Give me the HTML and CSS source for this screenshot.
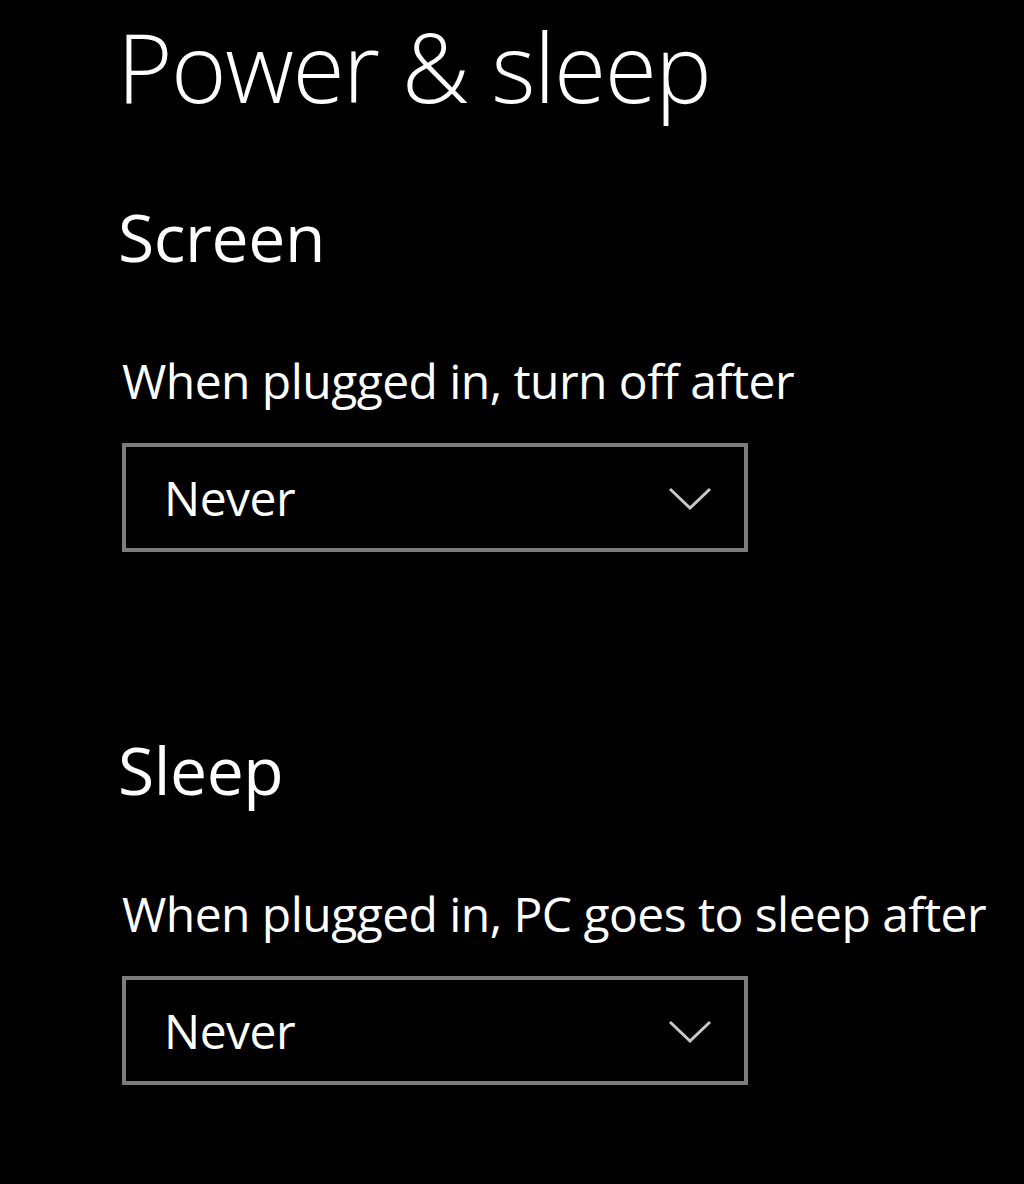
FILE: index.html
```html
<!DOCTYPE html>
<html>
<head>
    <meta charset="utf-8">
    <link rel="stylesheet" href="styles.css">
    <title>Power &amp; sleep</title>
</head>
<body>
    <div class="page">
        <h1 class="title">Power &amp; sleep</h1>

        <h2 class="section">Screen</h2>
        <div class="label">When plugged in, turn off after</div>
        <div class="dropdown">
            <span class="value">Never</span>
            <svg class="chevron" width="44" height="24" viewBox="0 0 44 24">
                <polyline points="2,2 22,21 42,2" fill="none" stroke="#c8c8c8" stroke-width="3"/>
            </svg>
        </div>

        <h2 class="section sleep">Sleep</h2>
        <div class="label">When plugged in, PC goes to sleep after</div>
        <div class="dropdown">
            <span class="value">Never</span>
            <svg class="chevron" width="44" height="24" viewBox="0 0 44 24">
                <polyline points="2,2 22,21 42,2" fill="none" stroke="#c8c8c8" stroke-width="3"/>
            </svg>
        </div>
    </div>
</body>
</html>
```

FILE: styles.css
```css
body {margin: 0; background-color: #000; color: #fff; font-family: "Open Sans", "Noto Sans", sans-serif;}
.page {padding: 19px 0 0 117px;}
.title {margin: 0; font-size: 95px; line-height: 95px; font-weight: 300; letter-spacing: -1.5px;}
.section {margin: 89px 0 0 0; font-size: 66px; line-height: 66px; font-weight: 400; letter-spacing: -0.4px; padding-left: 1px;}
.section.sleep {margin-top: 184px;}
.label {margin-top: 88px; font-size: 48px; line-height: 48px; padding-left: 5px; letter-spacing: -0.55px;}
.dropdown {box-sizing: border-box; margin: 38px 0 0 5px; width: 626px; height: 109px; border: 4px solid #7c7c7c; display: flex; align-items: center; justify-content: space-between; padding: 0 32px 0 38px;}
.value {font-size: 48px; line-height: 48px; letter-spacing: -0.5px;}
.chevron {display: block; margin-top: 2px;}
```
